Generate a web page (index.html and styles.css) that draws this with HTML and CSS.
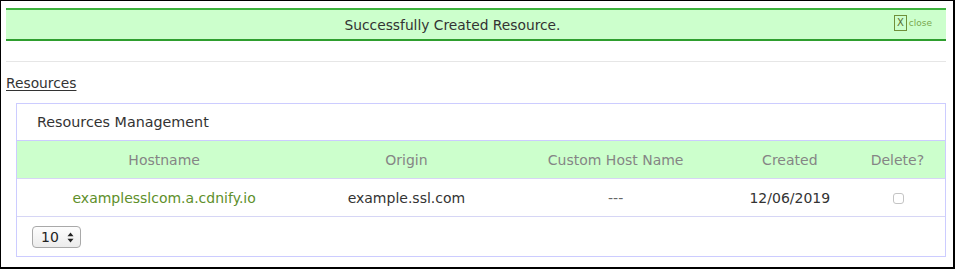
FILE: index.html
```html
<!DOCTYPE html>
<html lang="en">
<head>
  <meta charset="UTF-8">
  <meta name="viewport" content="width=device-width, initial-scale=1.0">
  <title>Resources</title>
  <link rel="stylesheet" href="styles.css">
</head>
<body>
  <div class="page">
    <div class="alert">
      <span class="alert-text">Successfully Created Resource.</span>
      <a class="close" href="#"><span class="close-x">X</span>close</a>
    </div>

    <hr class="divider">

    <a class="section-title" href="#">Resources</a>

    <div class="panel">
      <div class="panel-heading">Resources Management</div>
      <table class="resources">
        <colgroup>
          <col class="c-host">
          <col class="c-origin">
          <col class="c-custom">
          <col class="c-created">
          <col class="c-delete">
        </colgroup>
        <thead>
          <tr>
            <th>Hostname</th>
            <th>Origin</th>
            <th>Custom Host Name</th>
            <th>Created</th>
            <th>Delete?</th>
          </tr>
        </thead>
        <tbody>
          <tr>
            <td><a class="host-link" href="#">examplesslcom.a.cdnify.io</a></td>
            <td>example.ssl.com</td>
            <td class="muted">---</td>
            <td>12/06/2019</td>
            <td><input type="checkbox" class="del-box"></td>
          </tr>
        </tbody>
      </table>
      <div class="panel-footer">
        <span class="select-wrap">
          <select class="per-page">
            <option>10</option>
            <option>25</option>
            <option>50</option>
          </select>
          <svg class="select-arrows" width="7" height="11" viewBox="0 0 7 11">
            <path d="M3.5 0.5 L6.5 4.2 L0.5 4.2 Z" fill="#222"/>
            <path d="M3.5 10.5 L6.5 6.8 L0.5 6.8 Z" fill="#222"/>
          </svg>
        </span>
      </div>
    </div>
  </div>
</body>
</html>
```

FILE: styles.css
```css
html, body {
  margin: 0;
  padding: 0;
  background: #fff;
}
body {
  font-family: "DejaVu Sans", "Noto Sans", sans-serif;
  color: #333;
  font-size: 14px;
}
.page {
  box-sizing: border-box;
  height: 269px;
  border-style: solid;
  border-color: #000;
  border-width: 1px 2px 2px 1px;
  padding: 7px 7px 0 5px;
}
.alert {
  display: flex;
  align-items: center;
  justify-content: center;
  position: relative;
  height: 29px;
  padding-right: 47px;
  background: #ccffcc;
  border-top: 2px solid #3db33d;
  border-bottom: 2px solid #2e9e2e;
  font-size: 13.8px;
  color: #333;
}
.close {
  position: absolute;
  right: 14px;
  top: 5px;
  display: flex;
  align-items: center;
  gap: 2px;
  color: #7aa84e;
  font-size: 9px;
  text-decoration: none;
}
.close-x {
  display: inline-block;
  width: 11px;
  height: 14px;
  line-height: 14px;
  text-align: center;
  border: 1px solid #6f8f3a;
  color: #556b2f;
  font-size: 10px;
}
.divider {
  border: 0;
  border-top: 1px solid #e6e6e6;
  margin: 20px 0 0;
}
.section-title {
  display: inline-block;
  margin-top: 11px;
  color: #333;
  font-size: 13.8px;
  line-height: 20px;
  text-decoration: underline;
  text-underline-offset: 2px;
}
.panel {
  margin: 10px 0 0 10px;
  border: 1px solid #ccccff;
}
.panel-heading {
  height: 36px;
  line-height: 36px;
  padding-left: 20px;
  font-size: 14.3px;
  border-bottom: 1px solid #ccccff;
}
.resources {
  width: 100%;
  border-collapse: collapse;
  table-layout: fixed;
}
.c-host { width: 294px; }
.c-origin { width: 190px; }
.c-custom { width: 228px; }
.c-created { width: 120px; }
.c-delete { width: 95px; }
.resources th {
  background: #ccffcc;
  color: #858585;
  font-weight: normal;
  font-size: 14px;
  height: 37px;
  padding: 0;
  border-bottom: 1px solid #d6d6f5;
}
.resources td {
  text-align: center;
  font-size: 14px;
  color: #333;
  height: 37px;
  padding: 0;
  border-bottom: 1px solid #d6d6f5;
}
.resources td.muted {
  color: #666;
}
.host-link {
  color: #5e8f2a;
  text-decoration: none;
}
.del-box {
  appearance: none;
  width: 11px;
  height: 11px;
  margin: 0 0 0 2px;
  border: 1px solid #c4c4c4;
  border-radius: 3px;
  background: #fff;
  vertical-align: middle;
}
.panel-footer {
  height: 39px;
  display: flex;
  align-items: center;
  padding-left: 15px;
}
.select-wrap {
  position: relative;
  display: inline-block;
}
.per-page {
  appearance: none;
  box-sizing: border-box;
  width: 49px;
  height: 22px;
  padding: 0 0 0 8px;
  border: 1px solid #a9a9a9;
  border-radius: 4px;
  background: linear-gradient(#fdfdfd, #ececec);
  font-family: "DejaVu Sans", sans-serif;
  font-size: 14px;
  color: #222;
}
.select-arrows {
  position: absolute;
  right: 7px;
  top: 6px;
  pointer-events: none;
}
```
